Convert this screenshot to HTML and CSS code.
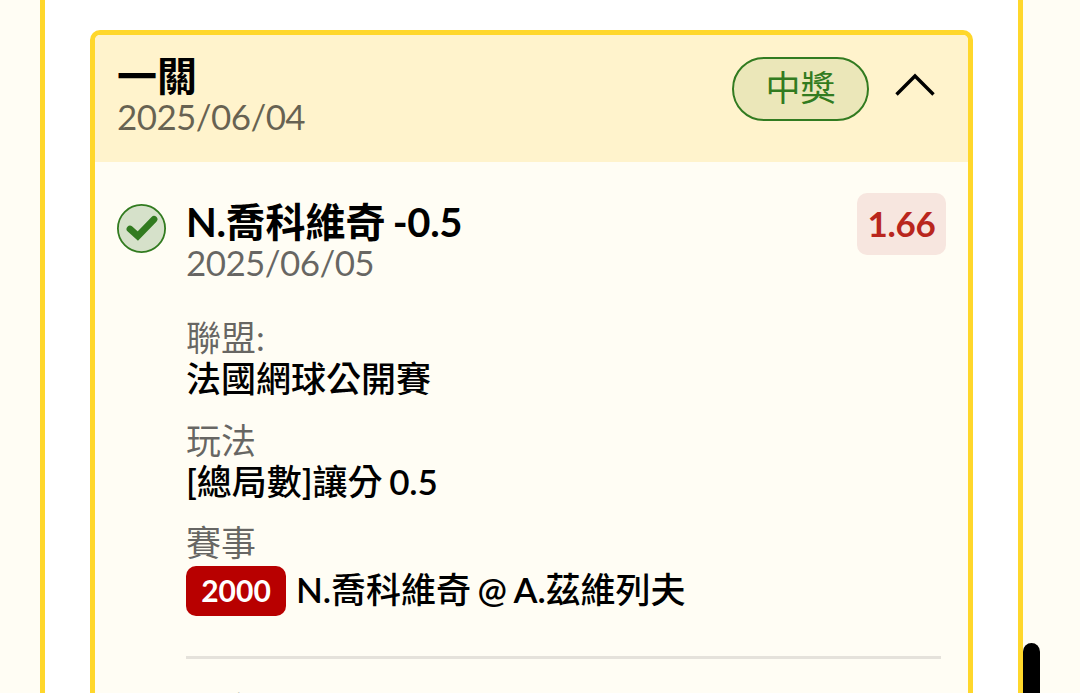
FILE: index.html
```html
<!DOCTYPE html>
<html lang="zh-TW">
<head>
  <meta charset="UTF-8">
  <meta name="viewport" content="width=device-width, initial-scale=1.0">
  <title>投注紀錄</title>
  <link rel="stylesheet" href="styles.css">
</head>
<body>
  <main class="panel">
    <section class="ticket">
      <header class="ticket-header">
        <div>
          <h1 class="title">一關</h1>
          <p class="date">2025/06/04</p>
        </div>
        <span class="status">中獎</span>
        <svg class="arrow" viewBox="0 0 40 24" fill="none" stroke="#000" stroke-width="3.4">
          <path d="M1.5 21.5L20 3L38.5 21.5"/>
        </svg>
      </header>

      <div class="bet">
        <svg class="check" viewBox="0 0 50 50">
          <circle cx="25.5" cy="25.5" r="23.6" fill="#d6e1ca" stroke="#327b20" stroke-width="1.8"/>
          <path d="M14 26L21.8 33L38 16.3" fill="none" stroke="#327b20" stroke-width="6.8" stroke-linecap="round"/>
        </svg>
        <div class="info">
          <div class="info-top">
            <div>
              <h2 class="title"><span class="latin">N.</span>喬科維奇<span class="latin"> -0.5</span></h2>
              <p class="date">2025/06/05</p>
            </div>
            <span class="odds">1.66</span>
          </div>
          <dl class="details">
            <dt>聯盟:</dt>
            <dd>法國網球公開賽</dd>
            <dt>玩法</dt>
            <dd><span class="latin">[</span>總局數<span class="latin">]</span>讓分<span class="latin"> 0.5</span></dd>
            <dt>賽事</dt>
            <dd class="match">
              <span class="number">2000</span>
              <div><span class="latin">N.</span>喬科維奇<span class="latin"> @ A.</span>茲維列夫</div>
            </dd>
          </dl>
          <div class="result">比賽</div>
        </div>
      </div>
    </section>
  </main>
  <div class="scrollbar"></div>
</body>
</html>
```

FILE: styles.css
```css
* {
  box-sizing: border-box;
  margin: 0;
  padding: 0;
}
body {
  height: 693px;
  overflow: hidden;
  background-color: #fffdf4;
  font-family: Lato, "Noto Sans CJK TC", sans-serif;
  font-size: 35px;
  line-height: 41px;
  color: #000;
}
.panel {
  width: 983px;
  height: 693px;
  margin-left: 40px;
  padding: 30px 45px 0;
  background-color: #fff;
  border: solid #ffd72b;
  border-width: 0 5px;
  overflow: hidden;
}
.ticket {
  height: 800px;
  background-color: #fffdf4;
  border: 5px solid #ffd72b;
  border-radius: 10px;
  overflow: hidden;
}
.ticket-header {
  display: flex;
  align-items: flex-start;
  height: 127px;
  padding: 22px 33px 0 22px;
  background-color: #fff3cc;
}
.ticket-header > div {
  margin-top: -1px;
}
.title {
  font-size: 40px;
  font-weight: 600;
  line-height: 40px;
}
.latin {
  font-weight: 600;
  letter-spacing: -0.1px;
  word-spacing: -2px;
}
.title .latin {
  font-weight: 700;
  letter-spacing: -0.4px;
}
.date {
  color: rgba(0, 0, 0, 0.6);
  letter-spacing: -0.6px;
}
.status {
  width: 137px;
  height: 64px;
  margin-left: auto;
  border: 2px solid #327b20;
  border-radius: 32px;
  background-color: #ebe7b9;
  color: #327b20;
  line-height: 56px;
  text-align: center;
}
.arrow {
  width: 40px;
  height: 24px;
  margin: 16px 0 0 26px;
}
.bet {
  display: flex;
  padding: 31px 22px 0 21px;
}
.check {
  flex: none;
  width: 50px;
  height: 50px;
  margin: 10px 20px 0 0;
}
.info {
  flex: 1;
}
.info-top {
  display: flex;
  justify-content: space-between;
  align-items: flex-start;
}
.info-top .title {
  padding-top: 9px;
  line-height: 40px;
}
.odds {
  width: 89px;
  height: 62px;
  border-radius: 10px;
  background-color: #f7e6df;
  color: #b9261d;
  font-weight: 700;
  line-height: 61px;
  letter-spacing: -0.3px;
  text-align: center;
}
.details {
  margin-top: 34px;
}
.details dt {
  color: rgba(0, 0, 0, 0.6);
}
.details dd {
  margin-bottom: 21px;
  font-weight: 500;
}
.details dd:nth-of-type(2) {
  margin-bottom: 20px;
}
.details .match {
  display: flex;
  align-items: center;
  gap: 10px;
  height: 50px;
  margin-top: 3px;
  margin-bottom: 40px;
}
.match > div {
  margin-top: -4px;
}
.number {
  width: 100px;
  height: 50px;
  border-radius: 10px;
  background-color: #b80000;
  color: #fff;
  font-size: 30px;
  font-weight: 700;
  line-height: 49px;
  text-align: center;
}
.result {
  margin-right: 5px;
  padding-top: 30px;
  border-top: 3px solid #e5e2db;
  color: rgba(0, 0, 0, 0.6);
}
/* thumb floats over the page edge */
.scrollbar {
  position: absolute;
  top: 643px;
  left: 1023px;
  width: 17px;
  height: 50px;
  border-radius: 9px 9px 0 0;
  background-color: #000;
}
```
